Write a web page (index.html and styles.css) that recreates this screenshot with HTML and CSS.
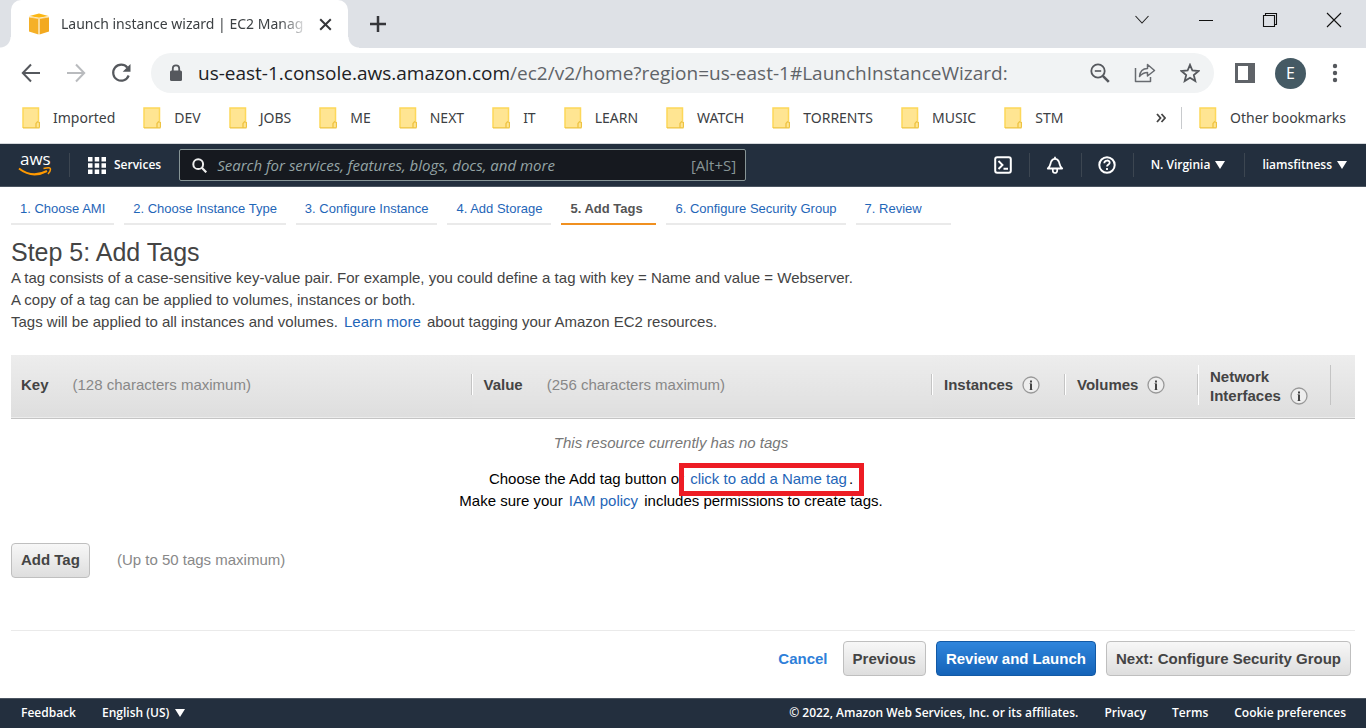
FILE: index.html
```html
<!DOCTYPE html>
<html lang="en">
<head>
<meta charset="utf-8">
<title>Launch instance wizard | EC2 Management Console</title>
<link rel="stylesheet" href="styles.css">
</head>
<body>
<svg class="defs" aria-hidden="true">
  <symbol id="folder" viewBox="0 0 18 22"><path d="M1 1h15.500v14h1v6H1z" fill="#ffe592"/><path d="M1 21V1h15.500v13.500" fill="none" stroke="#fdd85a" stroke-width="1.500"/><path d="M1 20.800h16.500M14 20.500v-4l1.500-1.800 2 .8v5" fill="none" stroke="#eec342" stroke-width="1.300"/></symbol>
  <symbol id="info" viewBox="0 0 18 18"><circle cx="9" cy="9" r="8" fill="#eee" stroke="#999" stroke-width="1.300"/><path d="M7 7.500h2M7 13.500h4" stroke="#bbb" fill="none" stroke-width="1"/><path d="M8 4.500h2v2H8zM8 7.500h2V14H8z" fill="#444"/></symbol>
</svg>

<header class="browser">
  <div class="tabstrip">
    <div class="tab">
      <svg class="tab-icon" width="22" height="22" viewBox="0 0 22 22"><path d="M1 4l9.500 1.500v16L1 18.500z" fill="#f5b027"/><path d="M21 4l-9.500 1.500v16L21 18.500z" fill="#f3a91f"/><path d="M1.500 3L11 .500 20.500 3 11 4.800z" fill="#fcb713"/><path d="M1 4l10 1.500L21 4M11 5v16" stroke="#fbdc9b" stroke-width="1.200" fill="none"/></svg>
      <span class="tab-title">Launch instance wizard | EC2 Manag</span>
      <button class="tab-close" aria-label="Close tab"><svg width="13" height="13" viewBox="0 0 13 13"><path d="M1.200 1.200l10.600 10.600M11.800 1.200L1.200 11.800" stroke="#35363a" stroke-width="2"/></svg></button>
    </div>
    <button class="new-tab" aria-label="New tab"><svg width="18" height="18" viewBox="0 0 18 18"><path d="M9 1v16M1 9h16" stroke="#35363a" stroke-width="2.500"/></svg></button>
    <div class="window-controls">
      <button aria-label="Search tabs"><svg width="16" height="16" viewBox="0 0 16 16"><path d="M1.500 4l6.500 7 6.500-7" fill="none" stroke="#222" stroke-width="1.100"/></svg></button>
      <button aria-label="Minimize"><svg width="16" height="16" viewBox="0 0 16 16"><path d="M1 8.500h14" stroke="#111"/></svg></button>
      <button aria-label="Restore"><svg width="16" height="16" viewBox="0 0 16 16"><path d="M1.500 3.500h11v11h-11zM3.500 3.500v-2h11v11h-2" fill="none" stroke="#111" stroke-width="1.100"/></svg></button>
      <button aria-label="Close"><svg width="16" height="16" viewBox="0 0 16 16"><path d="M1 1l14 14M15 1L1 15" stroke="#111" stroke-width="1.100"/></svg></button>
    </div>
  </div>

  <div class="toolbar">
    <div class="nav-buttons">
      <button aria-label="Back"><svg width="20" height="20" viewBox="0 0 20 20"><path d="M19 10H2M10 1.500L1.800 10l8.200 8.500" fill="none" stroke="#55585d" stroke-width="2"/></svg></button>
      <button aria-label="Forward"><svg width="20" height="20" viewBox="0 0 20 20"><path d="M1 10h17M10 1.500l8.200 8.500-8.200 8.500" fill="none" stroke="#b9bbbe" stroke-width="2"/></svg></button>
      <button aria-label="Reload"><svg width="20" height="20" viewBox="0 0 20 20"><path d="M16.300 4.500A8 8 0 1 0 17.700 12.500" fill="none" stroke="#55585d" stroke-width="2.200"/><path d="M19.500 1v7.800h-7.800z" fill="#55585d"/></svg></button>
    </div>
    <div class="omnibox">
      <svg width="14" height="18" viewBox="0 0 14 18"><rect x="1" y="6.500" width="12" height="10.500" rx="1.500" fill="#55585d"/><path d="M3.800 7V4.500a3.200 3.200 0 0 1 6.400 0V7" fill="none" stroke="#55585d" stroke-width="1.800"/></svg>
      <div class="url"><b>us-east-1.console.aws.amazon.com</b>/ec2/v2/home?region=us-east-1#LaunchInstanceWizard:</div>
      <button aria-label="Zoom"><svg width="20" height="20" viewBox="0 0 20 20"><circle cx="8" cy="8" r="6.700" fill="none" stroke="#55585d" stroke-width="1.800"/><path d="M12.800 12.800l6 6" stroke="#55585d" stroke-width="2.600"/><path d="M4.800 8h6.400" stroke="#55585d" stroke-width="1.600"/></svg></button>
      <button aria-label="Share"><svg width="22" height="20" viewBox="0 0 22 20"><path d="M1.500 5v13.500h15V14M5.500 13.500C6 8.500 9 5.500 13.500 5.500V1.500l7 6-7 5.500V9.500C10 9.500 8 10.500 5.500 13.500z" fill="none" stroke="#686b70" stroke-width="1.500" stroke-linejoin="round"/></svg></button>
      <button aria-label="Bookmark this page"><svg width="20" height="20" viewBox="0 0 20 20"><path d="M10 1.800l2.400 5.700 6.100.5-4.700 4 1.500 6.100L10 14.800l-5.300 3.300L6.200 12 1.500 8l6.100-.5z" fill="none" stroke="#55585d" stroke-width="1.800"/></svg></button>
    </div>
    <div class="profile">
      <button aria-label="Side panel"><svg width="20" height="20" viewBox="0 0 20 20"><path d="M0 0h20v20H0zM3 3v14h10V3z" fill="#5f6368" fill-rule="evenodd"/></svg></button>
      <button class="avatar">E</button>
      <button aria-label="Menu"><svg width="6" height="20" viewBox="0 0 6 20"><circle cx="3" cy="3" r="2.200" fill="#55585d"/><circle cx="3" cy="10" r="2.200" fill="#55585d"/><circle cx="3" cy="17" r="2.200" fill="#55585d"/></svg></button>
    </div>
  </div>

  <nav class="bookmarks" aria-label="Bookmarks">
    <a href="#"><svg><use href="#folder"/></svg>Imported</a>
    <a href="#"><svg><use href="#folder"/></svg>DEV</a>
    <a href="#"><svg><use href="#folder"/></svg>JOBS</a>
    <a href="#"><svg><use href="#folder"/></svg>ME</a>
    <a href="#"><svg><use href="#folder"/></svg>NEXT</a>
    <a href="#"><svg><use href="#folder"/></svg>IT</a>
    <a href="#"><svg><use href="#folder"/></svg>LEARN</a>
    <a href="#"><svg><use href="#folder"/></svg>WATCH</a>
    <a href="#"><svg><use href="#folder"/></svg>TORRENTS</a>
    <a href="#"><svg><use href="#folder"/></svg>MUSIC</a>
    <a href="#"><svg><use href="#folder"/></svg>STM</a>
    <div class="bookmarks-end">
      <button aria-label="More bookmarks"><svg class="chevrons" viewBox="0 0 10 10"><path d="M1 1l3.500 4L1 9M5.500 1L9 5 5.500 9" fill="none" stroke="#444" stroke-width="1.800"/></svg></button>
      <a href="#"><svg><use href="#folder"/></svg>Other bookmarks</a>
    </div>
  </nav>
</header>

<nav class="aws-nav" aria-label="AWS">
  <a class="aws-logo" href="#" aria-label="AWS home">
    <span>aws</span>
    <svg width="34" height="9" viewBox="0 0 34 9"><path d="M1 1.500C10 8.500 20 8.800 29 4" fill="none" stroke="#f90" stroke-width="2"/><path d="M25.500 1.500c4-1 6.500-.8 6.800 0s-.5 3.500-2.300 5.500" fill="none" stroke="#f90" stroke-width="1.500"/></svg>
  </a>
  <button class="services"><svg width="18" height="17" viewBox="0 0 18 17"><path d="M0 0h4.500v4.500H0zM6.700 0h4.500v4.500H6.700zM13.500 0H18v4.500h-4.500zM0 6.200h4.500v4.500H0zM6.700 6.200h4.500v4.500H6.700zM13.500 6.200H18v4.500h-4.500zM0 12.500h4.500V17H0zM6.700 12.500h4.500V17H6.700zM13.500 12.500H18V17h-4.500z" fill="#fff"/></svg>Services</button>
  <label class="search">
    <svg width="15" height="15" viewBox="0 0 15 15"><circle cx="6.200" cy="6.200" r="4.900" fill="none" stroke="#eee" stroke-width="2"/><path d="M9.800 9.800l4.500 4.500" stroke="#eee" stroke-width="2.200"/></svg>
    <input type="text" aria-label="Search" placeholder="Search for services, features, blogs, docs, and more">
    <span>[Alt+S]</span>
  </label>
  <div class="aws-tools">
    <button class="tool" aria-label="CloudShell"><svg width="18" height="18" viewBox="0 0 18 18"><rect x="1.200" y="1.200" width="15.600" height="15.600" rx="2" fill="none" stroke="#fff" stroke-width="2"/><path d="M4.500 5l4 4-4 4M9.500 12.800h4.500" fill="none" stroke="#fff" stroke-width="1.900"/></svg></button>
    <button class="tool" aria-label="Notifications"><svg width="18" height="18" viewBox="0 0 18 18"><path d="M1.800 12.500C4.500 10.500 4.200 7.800 5.200 5.500 6 3.800 7.300 2.800 9 2.800s3 1 3.800 2.700c1 2.300.7 5 3.400 7z" fill="none" stroke="#fff" stroke-width="1.800" stroke-linejoin="round"/><path d="M9 .800V3M6.800 13v1.800a2.200 2.200 0 0 0 4.400 0V13" fill="none" stroke="#fff" stroke-width="1.700"/></svg></button>
    <button class="tool" aria-label="Help"><svg width="18" height="18" viewBox="0 0 18 18"><circle cx="9" cy="9" r="7.700" fill="none" stroke="#fff" stroke-width="2"/><path d="M6.300 7.200c0-3.600 5.400-3.400 5.400-.4 0 1.700-2.700 1.600-2.700 3.700M9 12v2" fill="none" stroke="#fff" stroke-width="1.800"/></svg></button>
    <button class="region">N. Virginia <i class="caret"></i></button>
    <button class="account">liamsfitness <i class="caret"></i></button>
  </div>
</nav>

<main class="content">
  <nav class="steps" aria-label="Wizard steps">
    <a href="#">1. Choose AMI</a>
    <a href="#">2. Choose Instance Type</a>
    <a href="#">3. Configure Instance</a>
    <a href="#">4. Add Storage</a>
    <a href="#" class="active" aria-current="step">5. Add Tags</a>
    <a href="#">6. Configure Security Group</a>
    <a href="#">7. Review</a>
  </nav>
  <h1>Step 5: Add Tags</h1>
  <p class="intro">A tag consists of a case-sensitive key-value pair. For example, you could define a tag with key = Name and value = Webserver.<br>
  A copy of a tag can be applied to volumes, instances or both.<br>
  Tags will be applied to all instances and volumes. <a class="inline-link" href="#">Learn more</a> about tagging your Amazon EC2 resources.</p>

  <table class="tags">
    <colgroup><col><col><col class="col-flag"><col class="col-flag"><col class="col-flag"><col class="col-end"></colgroup>
    <thead>
      <tr>
        <th scope="col"><div>Key <span class="hint">(128 characters maximum)</span></div></th>
        <th scope="col"><div>Value <span class="hint">(256 characters maximum)</span></div></th>
        <th scope="col"><div>Instances <svg><use href="#info"/></svg></div></th>
        <th scope="col"><div>Volumes <svg><use href="#info"/></svg></div></th>
        <th scope="col"><div class="two-line"><span>Network<br>Interfaces</span> <svg><use href="#info"/></svg></div></th>
        <td></td>
      </tr>
    </thead>
    <tbody>
      <tr><td colspan="5" class="empty">
        <p class="none">This resource currently has no tags</p>
        <p>Choose the Add tag button or <span class="highlight"><a class="inline-link" href="#">click to add a Name tag</a>.</span></p>
        <p>Make sure your <a class="inline-link" href="#">IAM policy</a> includes permissions to create tags.</p>
      </td><td></td></tr>
    </tbody>
  </table>

  <div class="add-row"><button class="btn">Add Tag</button><span>(Up to 50 tags maximum)</span></div>

  <div class="actions">
    <a href="#" class="cancel">Cancel</a>
    <button class="btn">Previous</button>
    <button class="btn primary">Review and Launch</button>
    <button class="btn">Next: Configure Security Group</button>
  </div>
</main>

<footer class="footer">
  <a href="#">Feedback</a>
  <button>English (US) <i class="caret"></i></button>
  <span class="copyright">© 2022, Amazon Web Services, Inc. or its affiliates.</span>
  <a href="#">Privacy</a>
  <a href="#">Terms</a>
  <a href="#">Cookie preferences</a>
</footer>
</body>
</html>
```

FILE: styles.css
```css
* { box-sizing: border-box; }
body {
  margin: 0;
  min-height: 100vh;
  display: flex;
  flex-direction: column;
  background: #fff;
  color: #444;
  font: 15px/22px "Liberation Sans", Arial, sans-serif;
}
button { border: 0; padding: 0; background: none; font: inherit; color: inherit; display: flex; align-items: center; }
a { color: #1f66b8; text-decoration: none; }
svg { flex: none; display: block; }
p, h1 { margin: 0; }
.defs { position: absolute; width: 0; height: 0; }

/* Browser frame */
.browser { font-family: "Noto Sans", sans-serif; color: #3c4043; border-bottom: 1px solid #d5d8dc; }
.tabstrip { display: flex; height: 48px; background: #dee1e6; padding-left: 11px; }
.tab { position: relative; display: flex; align-items: center; width: 337px; padding: 0 16px 0 17px; background: #fff; border-radius: 10px 10px 0 0; }
.tab::before, .tab::after { content: ""; position: absolute; bottom: 0; width: 11px; height: 11px; }
.tab::before { right: 100%; background: radial-gradient(circle at 0 0, transparent 10px, #fff 11px); }
.tab::after { left: 100%; background: radial-gradient(circle at 100% 0, transparent 10px, #fff 11px); }
.tab-icon { margin-right: 11px; }
.tab-title { flex: 1; white-space: nowrap; font-size: 14px; mask-image: linear-gradient(to right, #000 88%, transparent); }
.tab-close { margin-left: 10px; }
.new-tab { margin-left: 21px; }
.window-controls { display: flex; gap: 48px; margin-left: auto; padding: 0 24px 8px 0; }
.toolbar { display: flex; align-items: center; height: 50px; padding: 0 28px 0 21px; }
.nav-buttons { display: flex; gap: 25px; margin-right: 20px; }
.omnibox { flex: 1; display: flex; align-items: center; gap: 24px; height: 40px; padding: 0 14px 0 18px; border-radius: 20px; background: #f1f3f4; }
.url { flex: 1; margin-left: -9px; font-family: "Open Sans", sans-serif; font-size: 19px; white-space: nowrap; color: #5f6368; }
.url b { font-weight: 400; color: #202124; }
.profile { display: flex; align-items: center; gap: 20px; margin-left: 21px; }
.avatar { justify-content: center; width: 31px; height: 31px; border-radius: 50%; background: #455a64; color: #fff; font-size: 16px; }
.profile button:last-child { margin-left: 6px; }
.bookmarks { display: flex; align-items: center; gap: 28px; height: 45px; padding: 0 20px 6px 22px; font-size: 14px; }
.bookmarks a { display: flex; align-items: center; gap: 13px; color: #3c4043; white-space: nowrap; }
.bookmarks svg { width: 18px; height: 22px; }
.bookmarks .chevrons { width: 10px; height: 10px; }
.bookmarks-end { display: flex; margin-left: auto; }
.bookmarks-end a { margin-left: 15px; padding-left: 17px; border-left: 1px solid #c8cacd; }

/* Console navigation */
.aws-nav { display: flex; align-items: center; height: 43px; background: #232f3e; border-bottom: 1px solid #4b5561; color: #fff; font: 600 12px/20px "Open Sans", sans-serif; }
.aws-logo { width: 70px; height: 24px; padding-left: 18px; border-right: 1px solid #3c4651; color: #fff; font: 400 17px/16px "Open Sans", sans-serif; }
.aws-logo span { display: block; height: 14px; line-height: 12px; padding-left: 2px; }
.services { gap: 8px; padding: 0 18px; }
.search { display: flex; align-items: center; gap: 10px; width: 567px; height: 32px; padding: 0 9px 0 12px; border: 1px solid #879596; border-radius: 2px; background: #16191f; color: #879596; font-weight: 400; font-size: 15px; }
.search input { flex: 1; min-width: 0; border: 0; padding: 0; background: none; color: #fff; outline: 0; font: inherit; }
.search input::placeholder { color: #95a5a6; font-style: italic; opacity: 1; }
.aws-tools { display: flex; margin-left: auto; }
.aws-tools button { height: 24px; border-left: 1px solid #3c4651; }
.aws-tools button:first-child { border-color: transparent; }
.tool { width: 52px; justify-content: center; }
.aws-tools .region, .aws-tools .account { gap: 5px; padding: 0 19px 0 17px; white-space: nowrap; }
.caret { width: 0; border: solid transparent; border-width: 8px 5px 0; border-top-color: #fff; }

/* Wizard */
.content { flex: 1; display: flex; flex-direction: column; padding: 0 11px; }
.steps { display: flex; gap: 10px; font-size: 13px; line-height: 20px; }
.steps a { min-width: 95px; padding: 12px 9px 4px; border-bottom: 2px solid #eaeaea; white-space: nowrap; }
.steps .active { border-color: #f09020; color: #555; font-weight: 700; }
h1 { margin-top: 12px; font-size: 25px; line-height: 30px; font-weight: 400; }
.inline-link { margin: 0 2px; }
.tags { width: 100%; margin-top: 22px; border-collapse: collapse; table-layout: fixed; }
.col-flag { width: 133px; }
.col-end { width: 24px; }
.tags thead tr { height: 63px; background: linear-gradient(#ededed, #dedede); border-bottom: 1px solid #c4c4c4; }
.tags th { padding: 0 0 3px; text-align: left; line-height: 19px; }
.tags th div { display: flex; align-items: center; height: 21px; padding-left: 11px; border-right: 1px solid #c4c4c4; border-left: 1px solid #fff; white-space: nowrap; }
.tags th:first-child div { padding-left: 10px; border-left: 0; }
.tags th svg { width: 18px; height: 18px; margin-left: 9px; }
.tags th .two-line { height: 40px; align-items: flex-end; }
.hint { margin-left: 24px; font-weight: 400; color: #888; }
.empty { padding: 13px 0 0; text-align: center; color: #000; }
.none { margin-bottom: 14px; font-style: italic; color: #777; }
.highlight { position: relative; }
.highlight::after { content: ""; position: absolute; inset: -7px -11px -9px -9px; border: 5px solid #ed1c24; }
.add-row { display: flex; align-items: center; gap: 27px; margin-top: 31px; color: #888; }
.btn { height: 35px; padding: 0 9px; border: 1px solid #bfbfbf; border-radius: 4px; background: linear-gradient(#f7f7f7, #dedede); color: #444; font-weight: 700; white-space: nowrap; }
.btn.primary { border-color: #1259a5; background: linear-gradient(#2f85dc, #1463b8); color: #fff; }
.actions { display: flex; align-items: center; justify-content: flex-end; gap: 10px; margin-top: auto; padding: 10px 4px 22px; border-top: 1px solid #eaeaea; }
.cancel { margin-right: 5px; color: #2f7fd9; font-weight: 700; }

.footer { display: flex; align-items: center; gap: 26px; height: 30px; padding: 0 20px 1px 21px; background: #232f3e; border-top: 1px solid #4b5561; color: #fff; font: 600 12px/20px "Open Sans", sans-serif; }
.footer a { color: #fff; }
.footer button { gap: 6px; }
.copyright { margin-left: auto; }
```
